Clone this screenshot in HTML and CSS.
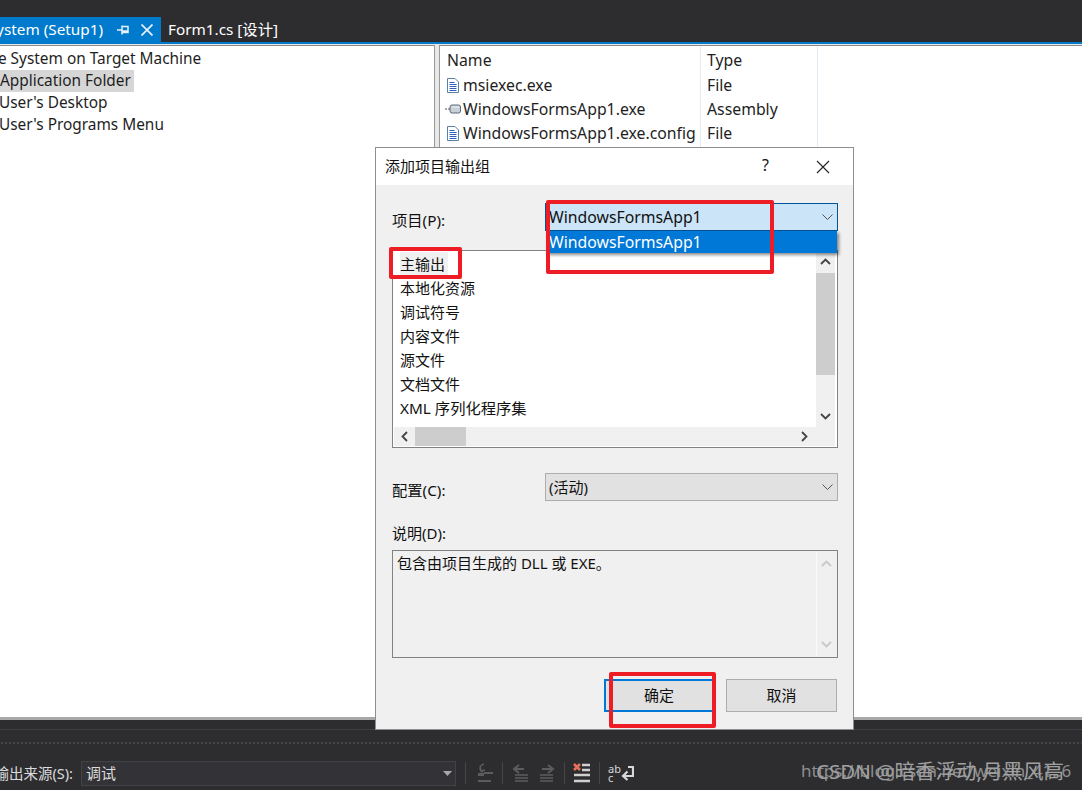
FILE: index.html
```html
<!DOCTYPE html>
<html lang="en">
<head>
    <meta charset="UTF-8">
    <title>File System (Setup1)</title>
    <link rel="stylesheet" href="styles.css">
</head>
<body>
    <div class="tab-bar">
        <div class="tab tab-active">
            <span class="tab-title">File System (Setup1)</span>
            <svg class="tab-pin" width="13" height="12" viewBox="0 0 13 12"><path d="M0 6h5M5 1.500v9M5 2.500h6v6H5M5 7h6" fill="none" stroke="#e8f2fa" stroke-width="1.500"/></svg>
            <svg class="tab-close" width="12" height="12" viewBox="0 0 12 12"><path d="M.5.5l11 11M11.500.5l-11 11" fill="none" stroke="#e8f2fa" stroke-width="1.700"/></svg>
        </div>
        <div class="tab">Form1.cs [设计]</div>
    </div>

    <div class="work-area">
        <div class="tree-pane">
            <div class="tree-row tree-root">File System on Target Machine</div>
            <div class="tree-row"><span class="tree-selected">Application Folder</span></div>
            <div class="tree-row">User's Desktop</div>
            <div class="tree-row">User's Programs Menu</div>
        </div>
        <div class="list-pane">
            <div class="list-col col-name">
                <div class="col-head">Name</div>
                <div class="file-row">
                    <svg class="file-icon" width="12" height="15" viewBox="0 0 12 15"><path d="M.5.500h7.500l3.500 3.500v10.500H.5z" fill="#fff" stroke="#5a7fa8"/><path d="M2.500 4.500h5M2.500 6.500h7M2.500 8.500h7M2.500 10.500h7M2.500 12.500h7" stroke="#2b62c0"/></svg>
                    msiexec.exe
                </div>
                <div class="file-row">
                    <svg class="file-icon asm-icon" width="16" height="10" viewBox="0 0 16 10"><path d="M0 5h5" stroke="#8a8a8a" stroke-width="1.400" stroke-dasharray="2 1"/><rect x="5" y="1" width="10.500" height="8" rx="2" fill="#c8d0d8" stroke="#5e6a76"/><path d="M7 3h7" stroke="#eef2f5"/></svg>
                    WindowsFormsApp1.exe
                </div>
                <div class="file-row">
                    <svg class="file-icon" width="12" height="15" viewBox="0 0 12 15"><path d="M.5.500h7.500l3.500 3.500v10.500H.5z" fill="#fff" stroke="#5a7fa8"/><path d="M2.500 4.500h5M2.500 6.500h7M2.500 8.500h7M2.500 10.500h7M2.500 12.500h7" stroke="#2b62c0"/></svg>
                    WindowsFormsApp1.exe.config
                </div>
            </div>
            <div class="list-col col-type">
                <div class="col-head">Type</div>
                <div class="file-row">File</div>
                <div class="file-row">Assembly</div>
                <div class="file-row">File</div>
            </div>
        </div>
    </div>

    <div class="output-panel">
        <div class="grip"></div>
        <div class="output-toolbar">
            <span class="source-label">输出来源(S):</span>
            <div class="source-select">
                <span class="source-value">调试</span>
                <svg width="9" height="5" viewBox="0 0 9 5"><path d="M0 0h9L4.500 5z" fill="#a8a8a8"/></svg>
            </div>
            <div class="tool-sep"></div>
            <svg class="tool tool-undo" width="16" height="20" viewBox="0 0 16 20"><path d="M7 1C3 2 2 5 4 8l2 1M3 3l1 5 4-1" fill="none" stroke="#5c5c5e" stroke-width="1.500"/><path d="M1 10h6v3H1z" fill="#5c5c5e"/><path d="M7 10h9M1 18h13" stroke="#5c5c5e" stroke-width="2"/></svg>
            <div class="tool-sep"></div>
            <svg class="tool tool-prev" width="15" height="20" viewBox="0 0 15 20"><path d="M6 2L1 6l5 4M1 6h10" fill="none" stroke="#5c5c5e" stroke-width="2"/><path d="M2 12h13M2 15h13M2 18h13" stroke="#5c5c5e" stroke-width="1.500"/></svg>
            <svg class="tool tool-next" width="15" height="20" viewBox="0 0 15 20"><path d="M8 2l5 4-5 4M13 6H2" fill="none" stroke="#5c5c5e" stroke-width="2"/><path d="M0 12h13M0 15h13M0 18h13" stroke="#5c5c5e" stroke-width="1.500"/></svg>
            <div class="tool-sep"></div>
            <svg class="tool tool-clear" width="17" height="20" viewBox="0 0 17 20"><path d="M1 1l6 6M7 1L1 7" stroke="#e8705a" stroke-width="2.500"/><path d="M9 2h8M9 7h8M1 12h16M1 18h16" stroke="#d0d0d0" stroke-width="2.500"/></svg>
            <div class="tool-sep"></div>
            <div class="wrap-tool">
                <span class="wrap-text">ab<br>c</span>
                <svg width="13" height="16" viewBox="0 0 13 16"><path d="M7 2h5v9H3M6.500 6.500L2 11l4.500 4" fill="none" stroke="#d8d8d8" stroke-width="2.200"/></svg>
            </div>
        </div>
    </div>

    <div class="dialog">
        <div class="dialog-title">
            <span class="dialog-name">添加项目输出组</span>
            <span class="help-btn">?</span>
            <svg width="14" height="14" viewBox="0 0 14 14"><path d="M1 1l12 12M13 1L1 13" fill="none" stroke="#222" stroke-width="1.100"/></svg>
        </div>
        <div class="dialog-body">
            <div class="field-row project-row">
                <label>项目(P):</label>
                <div class="combo combo-open">
                    <span>WindowsFormsApp1</span>
                    <svg width="11" height="6" viewBox="0 0 11 6"><path d="M.5.5l5 5 5-5" fill="none" stroke="#555"/></svg>
                    <div class="combo-drop">WindowsFormsApp1</div>
                </div>
            </div>

            <div class="output-list">
                <div class="list-main">
                    <div class="list-items">
                        <div class="item"><span class="item-first">主输出</span></div>
                        <div class="item">本地化资源</div>
                        <div class="item">调试符号</div>
                        <div class="item">内容文件</div>
                        <div class="item">源文件</div>
                        <div class="item">文档文件</div>
                        <div class="item item-xml">XML 序列化程序集</div>
                    </div>
                    <div class="vscroll">
                        <svg width="11" height="7" viewBox="0 0 11 7"><path d="M1 6l4.500-4.500L10 6" fill="none" stroke="#444" stroke-width="1.800"/></svg>
                        <div class="vtrack"><div class="vthumb"></div></div>
                        <svg width="11" height="7" viewBox="0 0 11 7"><path d="M1 1l4.500 4.500L10 1" fill="none" stroke="#444" stroke-width="1.800"/></svg>
                    </div>
                </div>
                <div class="hscroll">
                    <svg width="7" height="11" viewBox="0 0 7 11"><path d="M6 1L1.500 5.500 6 10" fill="none" stroke="#444" stroke-width="1.800"/></svg>
                    <div class="htrack"><div class="hthumb"></div></div>
                    <svg width="7" height="11" viewBox="0 0 7 11"><path d="M1 1l4.500 4.500L1 10" fill="none" stroke="#444" stroke-width="1.800"/></svg>
                </div>
            </div>

            <div class="field-row config-row">
                <label>配置(C):</label>
                <div class="combo">
                    <span class="combo-value">(活动)</span>
                    <svg width="11" height="6" viewBox="0 0 11 6"><path d="M.5.5l5 5 5-5" fill="none" stroke="#555"/></svg>
                </div>
            </div>

            <label class="desc-label">说明(D):</label>
            <div class="desc-box">
                <div class="desc-text">包含由项目生成的 DLL 或 EXE。</div>
                <div class="desc-scroll">
                    <svg width="11" height="7" viewBox="0 0 11 7"><path d="M1 6l4.500-4.500L10 6" fill="none" stroke="#c8c8c8" stroke-width="1.800"/></svg>
                    <svg width="11" height="7" viewBox="0 0 11 7"><path d="M1 1l4.500 4.500L10 1" fill="none" stroke="#c8c8c8" stroke-width="1.800"/></svg>
                </div>
            </div>

            <div class="dialog-buttons">
                <button class="btn btn-default">确定</button>
                <button class="btn">取消</button>
            </div>
        </div>

        <div class="mark mark-combo"></div>
        <div class="mark mark-item"></div>
        <div class="mark mark-ok"></div>
    </div>

    <div class="watermark">
        <span class="wm-url">https://blog.csdn.net/weixin_41..6</span>
        <span class="wm-name">CSDN @暗香浮动,月黑风高</span>
    </div>
</body>
</html>
```

FILE: styles.css
```css
html, body {
    height: 100%;
}

body {
    margin: 0;
    width: 1082px;
    height: 790px;
    overflow: hidden;
    position: relative;
    display: flex;
    flex-direction: column;
    background-color: #2d2d30;
    font-family: "Noto Sans", "Noto Sans CJK SC", sans-serif;
    font-size: 15.8px;
    color: #1e1e1e;
}

/* document tabs */
.tab-bar {
    height: 25px;
    margin-top: 17px;
    display: flex;
    color: #fff;
    font-size: 15.3px;
    overflow: hidden;
    flex-shrink: 0;
}

.tab {
    display: flex;
    align-items: center;
    padding-left: 7px;
    padding-bottom: 3px;
    box-sizing: border-box;
    white-space: nowrap;
}

.tab-active {
    width: 161px;
    padding-left: 0;
    padding-right: 8px;
    padding-bottom: 2px;
    justify-content: flex-end;
    background-color: #007acc;
    flex-shrink: 0;
}

.tab-title {
    flex-shrink: 0;
    margin-right: 14px;
}

.tab-pin {
    margin-right: 11px;
    margin-top: 2px;
    flex-shrink: 0;
}

.tab-close {
    margin-top: 3px;
    flex-shrink: 0;
}

/* setup project panes */
.work-area {
    height: 678px;
    flex-shrink: 0;
    display: flex;
    box-sizing: border-box;
    border-top: 2px solid #007acc;
    background-color: #e8e8e8;
    border-bottom: 3px solid #a8a8a8;
}

.tree-pane {
    width: 435px;
    margin-top: 1px;
    border-top: 1px solid #8a8a8a;
    border-right: 1px solid #9a9a9a;
    background-color: #fff;
    box-sizing: border-box;
    padding-top: 2px;
    font-size: 15.4px;
    overflow: hidden;
    flex-shrink: 0;
}

.tree-row {
    height: 22px;
    line-height: 22px;
    margin-left: -1px;
    white-space: nowrap;
}

.tree-root {
    margin-left: -18px;
}

.tree-selected {
    display: inline-block;
    background-color: #d6d6d6;
    padding: 0 3px 0 1px;
}

.list-pane {
    margin-left: 4px;
    margin-top: 1px;
    flex: 1;
    display: flex;
    background-color: #fff;
    border-top: 1px solid #8a8a8a;
    border-left: 1px solid #9a9a9a;
    padding-left: 7px;
}

.list-col {
    border-right: 1px solid #e3ecf6;
    height: 104px;
    box-sizing: border-box;
}

.col-name {
    width: 254px;
}

.col-type {
    width: 117px;
    padding-left: 6px;
}

.col-head {
    height: 27px;
    line-height: 29px;
}

.file-row {
    height: 24px;
    line-height: 24px;
    display: flex;
    align-items: center;
    white-space: nowrap;
}

.file-icon {
    margin-right: 4px;
    flex-shrink: 0;
}

.asm-icon {
    margin-left: -2px;
    margin-right: 2px;
}

/* output window */
.output-panel {
    flex: 1;
    min-height: 0;
    border-top: 1px solid #3f3f46;
    margin-top: 9px;
}

.grip {
    height: 4px;
    margin-top: 11px;
    background-image: radial-gradient(#46464a 1px, transparent 1px);
    background-size: 4px 4px;
}

.output-toolbar {
    display: flex;
    align-items: center;
    height: 26px;
    margin-top: 15px;
    color: #dcdcdc;
    font-size: 14.5px;
}

.source-label {
    width: 81px;
    padding-right: 8px;
    padding-bottom: 2px;
    box-sizing: border-box;
    display: flex;
    justify-content: flex-end;
    flex-shrink: 0;
    white-space: nowrap;
}

.source-select {
    width: 375px;
    height: 25px;
    box-sizing: border-box;
    border: 1px solid #434346;
    background-color: #333337;
    display: flex;
    align-items: center;
    justify-content: space-between;
    padding: 0 3px 0 4px;
    flex-shrink: 0;
}

.source-value {
    font-size: 15px;
    padding-bottom: 2px;
}

.tool-sep {
    width: 1px;
    height: 22px;
    background-color: #46464a;
    margin-left: 9px;
    flex-shrink: 0;
}

.tool {
    flex-shrink: 0;
}

.tool-undo {
    margin-left: 11px;
}

.tool-prev {
    margin-left: 10px;
}

.tool-next {
    margin-left: 12px;
}

.tool-clear {
    margin-left: 8px;
}

.wrap-tool {
    margin-left: 8px;
    display: flex;
    align-items: center;
}

.wrap-text {
    font-size: 11px;
    line-height: 9px;
    color: #d8d8d8;
}

/* add project output group dialog */
.dialog {
    position: absolute;
    left: 375px;
    top: 147px;
    width: 479px;
    height: 583px;
    box-sizing: border-box;
    border: 1px solid #8e8e8e;
    background-color: #f0f0f0;
    font-size: 15px;
    color: #111;
}

.dialog-title {
    height: 37px;
    background-color: #fff;
    display: flex;
    align-items: center;
    padding-left: 9px;
    padding-right: 23px;
}

.dialog-name {
    flex: 1;
    padding-bottom: 3px;
}

.help-btn {
    margin-right: 47px;
    padding-bottom: 3px;
    font-size: 16px;
}

.dialog-body {
    padding: 0 15px 0 16px;
}

.field-row {
    display: flex;
    align-items: center;
}

.field-row label {
    width: 153px;
    padding-top: 4px;
    font-size: 15.3px;
    flex-shrink: 0;
}

.project-row {
    margin-top: 18px;
    margin-bottom: 19px;
}

.combo {
    flex: 1;
    height: 28px;
    box-sizing: border-box;
    border: 1px solid #adadad;
    background-color: #e1e1e1;
    display: flex;
    align-items: center;
    justify-content: space-between;
    padding: 0 4px 0 3px;
    position: relative;
}

.combo-open {
    border-color: #005499;
    background-color: #cce4f7;
    font-size: 15.8px;
}

.combo-value {
    padding-bottom: 2px;
}

.combo-drop {
    position: absolute;
    left: 0;
    right: 0;
    top: 27px;
    height: 22px;
    line-height: 22px;
    padding-left: 3px;
    background-color: #0078d7;
    color: #fff;
    box-shadow: 2px 2px 3px rgba(0, 0, 0, 0.45);
    z-index: 2;
}

.output-list {
    height: 198px;
    box-sizing: border-box;
    border: 1px solid #828282;
    background-color: #fff;
    display: flex;
    flex-direction: column;
}

.list-main {
    flex: 1;
    min-height: 0;
    display: flex;
}

.list-items {
    flex: 1;
    padding: 1px 0 0 7px;
}

.item {
    height: 24px;
    line-height: 24px;
}

.item-first {
    display: inline-block;
    background-color: #f0f0f0;
    padding: 0 3px 0 0;
}

.item-xml {
    font-size: 15.3px;
}

.vscroll {
    width: 19px;
    margin-right: 2px;
    background-color: #f0f0f0;
    display: flex;
    flex-direction: column;
    align-items: center;
    justify-content: space-between;
    padding: 7px 0;
    box-sizing: border-box;
}

.vtrack {
    flex: 1;
    width: 100%;
    padding-top: 8px;
}

.vthumb {
    height: 102px;
    background-color: #cdcdcd;
}

.hscroll {
    height: 19px;
    margin: 0 2px 1px 1px;
    background-color: #f0f0f0;
    display: flex;
    align-items: center;
    padding: 0 27px 0 7px;
}

.htrack {
    flex: 1;
    height: 100%;
    padding-left: 7px;
}

.hthumb {
    width: 51px;
    height: 100%;
    background-color: #cdcdcd;
}

.config-row {
    margin-top: 25px;
}

.desc-label {
    display: block;
    margin-top: 18px;
    height: 28px;
    line-height: 28px;
}

.desc-box {
    height: 108px;
    margin-top: 3px;
    box-sizing: border-box;
    border: 1px solid #828282;
    display: flex;
}

.desc-text {
    flex: 1;
    padding: 1px 0 0 4px;
}

.desc-scroll {
    width: 19px;
    margin-right: 2px;
    border-left: 1px solid #fafafa;
    display: flex;
    flex-direction: column;
    align-items: center;
    justify-content: space-between;
    padding: 9px 0;
    box-sizing: border-box;
}

.dialog-buttons {
    display: flex;
    margin-top: 21px;
    gap: 12px;
}

.btn {
    width: 111px;
    height: 33px;
    border: 1px solid #adadad;
    background-color: #e1e1e1;
    font-family: inherit;
    font-size: 15px;
    color: #111;
    padding: 0 0 2px;
}

.btn-default {
    margin-left: 212px;
    width: 110px;
    border: 2px solid #0078d7;
}

/* red annotation boxes drawn on the screenshot */
.mark {
    position: absolute;
    box-sizing: border-box;
    border: 4px solid #ee1c25;
    border-radius: 2px;
    z-index: 3;
}

.mark-combo {
    left: 170px;
    top: 52px;
    width: 228px;
    height: 74px;
}

.mark-item {
    left: 13px;
    top: 99px;
    width: 73px;
    height: 32px;
}

.mark-ok {
    left: 233px;
    top: 524px;
    width: 107px;
    height: 56px;
}

.watermark {
    position: absolute;
    left: 800px;
    top: 757px;
    width: 282px;
    height: 28px;
    white-space: nowrap;
}

.wm-url,
.wm-name {
    position: absolute;
    top: 0;
    line-height: 28px;
}

.wm-url {
    left: 1px;
    color: #8e8e8e;
    font-size: 17px;
}

.wm-name {
    left: 16px;
    color: #a0a0a0;
    font-size: 20.5px;
}
```
